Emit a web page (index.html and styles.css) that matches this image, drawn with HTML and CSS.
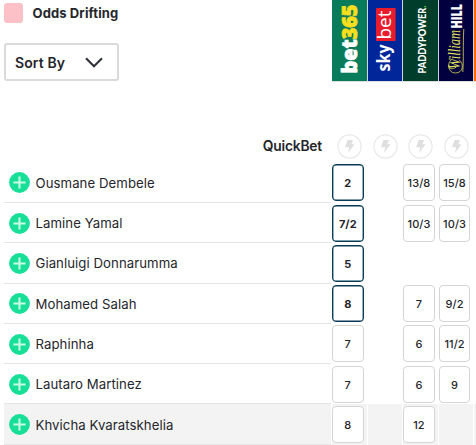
FILE: index.html
```
<!DOCTYPE html>
<html lang="en">
<head>
<meta charset="utf-8">
<title>Odds</title>
<link rel="stylesheet" href="styles.css">
</head>
<body>
<svg width="0" height="0" class="defs">
  <symbol id="plus" viewBox="0 0 21 21"><circle cx="10.5" cy="10.5" r="10.4" fill="#17df98"/><path d="M10.5 4.4v12.2M4.4 10.5h12.2" stroke="#c8fbe7" stroke-width="2.1"/></symbol>
  <symbol id="bolt" viewBox="0 0 25 25"><circle cx="12.5" cy="12.5" r="11.6" fill="#fff" stroke="#e8e8e8" stroke-width="1.2"/><path d="M10.6 6h5.4l-1.6 4.3h3.3l-6.8 8.8 1.3-5.9H8z" fill="#dfdfdf"/></symbol>
</svg>
<header class="top">
  <div class="controls">
    <div class="legend"><span class="swatch"></span><span class="legend-text">Odds Drifting</span></div>
    <button class="sort"><span>Sort By</span><svg width="18" height="11" viewBox="0 0 18 11"><path d="M1 1.2l8 8 8-8" fill="none" stroke="#30323b" stroke-width="2.1"/></svg></button>
  </div>
  <div class="logos">
    <svg class="logo bet365" viewBox="0 0 34 81"><text transform="translate(25 73.5) rotate(-90)" textLength="69" lengthAdjust="spacingAndGlyphs" font-family="Open Sans" font-weight="800" font-size="21" fill="#fff" stroke="#fff" stroke-width=".8">bet<tspan fill="#f7df1e" stroke="#f7df1e">365</tspan></text></svg>
    <svg class="logo sky" viewBox="0 0 34 81"><rect x="7.7" y="8" width="19.6" height="33" rx="1" fill="#e91c2c"/><g font-family="Open Sans" fill="#fff" font-size="18"><text transform="translate(22 71.5) rotate(-90)" textLength="27" lengthAdjust="spacingAndGlyphs" font-weight="700">sky</text><text transform="translate(22.5 39.5) rotate(-90)" textLength="29" lengthAdjust="spacingAndGlyphs" font-weight="400">bet</text></g></svg>
    <svg class="logo paddy" viewBox="0 0 34 81"><text transform="translate(23.2 73.5) rotate(-90)" textLength="68" lengthAdjust="spacingAndGlyphs" font-family="Lato" font-weight="900" font-size="10.6" fill="#fff">PADDYPOWER<tspan fill="#65c32f">.</tspan></text></svg>
    <svg class="logo hill" viewBox="0 0 34 81"><text transform="translate(22.7 28.5) rotate(-90)" textLength="24.5" lengthAdjust="spacingAndGlyphs" font-family="Open Sans" font-weight="800" font-size="16.5" fill="#fff">HILL</text><text transform="translate(21 69) rotate(-90)" textLength="39" lengthAdjust="spacingAndGlyphs" font-family="Liberation Serif" font-style="italic" font-size="16" fill="#e5e65a">William</text><path d="M12 60c-4 2-4 13 4 13 8 0 9-9 4-13M23.5 72c1-14 0-26 1-43M9 65c0 4 4 5 8 2" fill="none" stroke="#d9dc55" stroke-width=".8"/></svg>
    <span class="logo next"></span>
  </div>
</header>
<main>
  <div class="row quick">
    <div class="label">QuickBet</div>
    <div class="cell"><svg><use href="#bolt"/></svg></div><div class="cell"><svg><use href="#bolt"/></svg></div><div class="cell"><svg><use href="#bolt"/></svg></div><div class="cell"><svg><use href="#bolt"/></svg></div>
  </div>
  <div class="row"><div class="name"><svg><use href="#plus"/></svg><span>Ousmane Dembele</span></div><div class="cell"><b class="odd best">2</b></div><div class="cell"></div><div class="cell"><span class="odd">13/8</span></div><div class="cell"><span class="odd">15/8</span></div></div>
  <div class="row"><div class="name"><svg><use href="#plus"/></svg><span>Lamine Yamal</span></div><div class="cell"><b class="odd best">7/2</b></div><div class="cell"></div><div class="cell"><span class="odd">10/3</span></div><div class="cell"><span class="odd">10/3</span></div></div>
  <div class="row"><div class="name"><svg><use href="#plus"/></svg><span>Gianluigi Donnarumma</span></div><div class="cell"><b class="odd best">5</b></div><div class="cell"></div><div class="cell"></div><div class="cell"></div></div>
  <div class="row"><div class="name"><svg><use href="#plus"/></svg><span>Mohamed Salah</span></div><div class="cell"><b class="odd best">8</b></div><div class="cell"></div><div class="cell"><span class="odd">7</span></div><div class="cell"><span class="odd">9/2</span></div></div>
  <div class="row"><div class="name"><svg><use href="#plus"/></svg><span>Raphinha</span></div><div class="cell"><span class="odd">7</span></div><div class="cell"></div><div class="cell"><span class="odd">6</span></div><div class="cell"><span class="odd">11/2</span></div></div>
  <div class="row"><div class="name"><svg><use href="#plus"/></svg><span>Lautaro Martinez</span></div><div class="cell"><span class="odd">7</span></div><div class="cell"></div><div class="cell"><span class="odd">6</span></div><div class="cell"><span class="odd">9</span></div></div>
  <div class="row shaded"><div class="name"><svg><use href="#plus"/></svg><span>Khvicha Kvaratskhelia</span></div><div class="cell"><span class="odd">8</span></div><div class="cell"></div><div class="cell"><span class="odd">12</span></div><div class="cell"></div><div class="cell"></div></div>
</main>
</body>
</html>
```
FILE: styles.css
```
* { box-sizing: border-box; }
body { margin: 0; width: 476px; height: 445px; overflow: hidden; background: #fff; color: #24262b; font-family: Inter, "Liberation Sans", sans-serif; }
.defs { display: none; }
.top { display: flex; justify-content: space-between; height: 130px; padding-left: 4px; }
.legend { display: flex; align-items: center; gap: 9.5px; height: 20px; margin-top: 3px; }
.swatch { width: 19px; height: 19.5px; border-radius: 3px; background: #fbc1c7; }
.legend-text { font-size: 13px; font-weight: 700; letter-spacing: .12px; }
.sort { display: flex; align-items: center; justify-content: space-between; width: 115px; height: 38px; margin-top: 20px; padding: 1px 14px 0 9px; border: 2px solid #dadada; border-radius: 3px; background: #fff; color: #24262b; font: 600 14px Inter, sans-serif; letter-spacing: .1px; }
.logos { display: grid; grid-template-columns: repeat(4, 34.6px) 2px; column-gap: 1px; width: 144px; height: 82px; overflow: hidden; border-bottom: 1px solid #dedede; background: #d3d3dc; }
.logo { display: block; width: 100%; height: 81px; }
.bet365 { background: #087b5b; }
.sky { background: #00269a; }
.paddy { background: #003d2b; }
.hill { background: #02003f; }
.next { background: #ff6900; }
.row { display: grid; grid-template-columns: 331px repeat(4, 34.6px) 1fr; column-gap: 1px; height: 40.3px; }
.quick { height: 32.7px; }
.quick .cell { padding-top: 0; }
.quick .cell svg { display: block; width: 25px; height: 25px; margin: 4px 0 0 5px; }
.label { padding: 7px 9px 0 0; text-align: right; font-size: 13.8px; font-weight: 600; line-height: 18px; letter-spacing: -.2px; }
.name { display: flex; align-items: center; gap: 5.5px; margin-left: 4px; padding: 1px 0 0 5px; border-bottom: 1px solid #e5e5e5; font-size: 13.2px; font-weight: 400; letter-spacing: .06px; }
.name svg { width: 21px; height: 21px; }
.cell { padding-top: 1.6px; }
.odd { display: flex; align-items: center; justify-content: center; width: 31.5px; height: 37px; padding-top: 1px; border: 1px solid #d5d5d5; border-radius: 4px; background: #fff; font-size: 11px; font-weight: 450; letter-spacing: .05px; }
.best { border: 1px solid #073b55; box-shadow: inset 0 0 0 .4px #073b55; font-weight: 700; }
.shaded .name, .shaded .cell { background: #f3f3f3; }
```
